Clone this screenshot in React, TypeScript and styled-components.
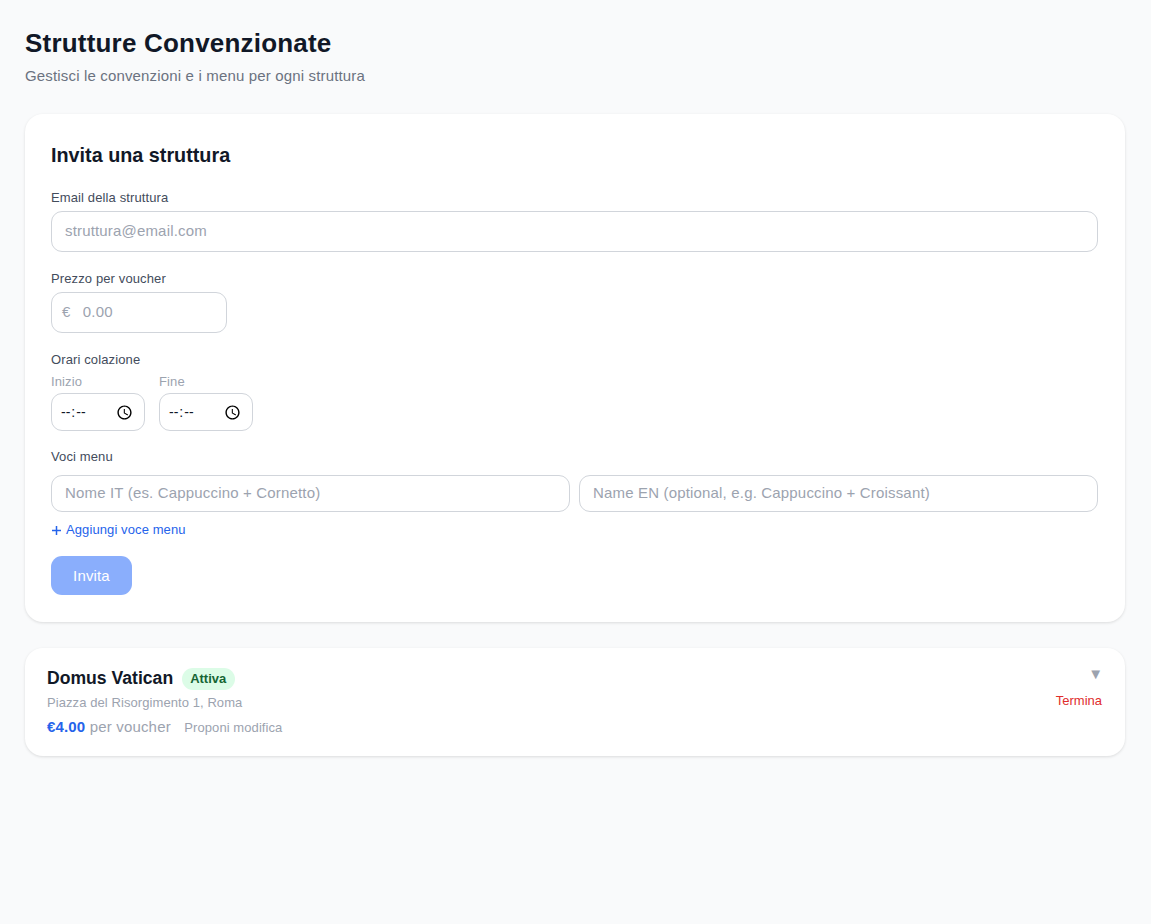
import styled, { createGlobalStyle } from "styled-components";

const GlobalStyle = createGlobalStyle`
  * { box-sizing: border-box; }
  html, body { margin: 0; background: #f9fafb; }
  body { font-family: "Liberation Sans", Arial, sans-serif; color: #111827; }
  input { font-family: inherit; }
`;

const Page = styled.main`
  min-height: 924px;
  padding: 26px 26px 26px 25px;
`;

const Title = styled.h1`
  margin: 0;
  font-size: 26px;
  letter-spacing: 0.2px;
  line-height: 34px;
  font-weight: 700;
  color: #111827;
`;

const Subtitle = styled.p`
  margin: 6px 0 0;
  font-size: 15px;
  letter-spacing: 0.16px;
  line-height: 20px;
  color: #6b7280;
`;

const Card = styled.section`
  margin-top: 28px;
  padding: 26px 27px 27px 26px;
  background: #fff;
  border-radius: 18px;
  box-shadow: 0 1px 3px rgba(0, 0, 0, 0.12);
`;

const CardTitle = styled.h2`
  margin: 0 0 19px;
  font-size: 19.8px;
  line-height: 30px;
  font-weight: 700;
  color: #111827;
`;

const Field = styled.div<{ $gap?: number }>`
  margin-bottom: ${(p) => p.$gap ?? 17.5}px;
`;

const Label = styled.label<{ $gap?: number }>`
  display: block;
  margin-bottom: ${(p) => p.$gap ?? 3.5}px;
  font-size: 13px;
  letter-spacing: 0.12px;
  line-height: 18.5px;
  color: #434c5c;
`;

const Input = styled.input`
  display: block;
  width: 100%;
  height: 41px;
  padding: 0 13px 2px;
  border: 1px solid #d1d5db;
  border-radius: 11px;
  background: #fff;
  font-size: 15px;
  letter-spacing: 0.17px;
  color: #111827;
  outline: none;
  &::placeholder { color: #9ca3af; opacity: 1; }
`;

const PriceBox = styled.div`
  display: flex;
  align-items: center;
  gap: 12.5px;
  width: 176px;
  height: 41px;
  padding: 0 10px 2px;
  border: 1px solid #d1d5db;
  border-radius: 11px;
  font-size: 15px;
  color: #9ca3af;
`;

const PriceInput = styled.input`
  width: 100px;
  border: 0;
  padding: 0;
  font-size: 15px;
  letter-spacing: 0.17px;
  outline: none;
  &::placeholder { color: #9ca3af; opacity: 1; }
`;

const TimeRow = styled.div`
  display: flex;
  gap: 14px;
`;

const SmallLabel = styled.label`
  display: block;
  margin-bottom: 1px;
  font-size: 13px;
  letter-spacing: 0.12px;
  line-height: 20px;
  color: #9ca3af;
`;

const TimeInput = styled.input`
  display: block;
  width: 94px;
  height: 38px;
  padding: 0 11px 0 8px;
  border: 1px solid #d1d5db;
  border-radius: 11px;
  background: #fff;
  font-size: 14px;
  color: #111827;
  outline: none;
  &::-webkit-datetime-edit-ampm-field { display: none; }
  &::-webkit-calendar-picker-indicator {
    width: 17px;
    height: 17px;
    margin: 0;
    padding: 0;
  }
`;

const MenuRow = styled.div`
  display: grid;
  grid-template-columns: 1fr 1fr;
  gap: 9px;
`;

const MenuInput = styled(Input)`
  height: 37px;
`;

const AddLink = styled.button`
  display: flex;
  align-items: center;
  gap: 5px;
  margin: 9px 0 17px;
  padding: 0 0 0 1px;
  border: 0;
  background: none;
  font-family: inherit;
  font-size: 13px;
  letter-spacing: 0.1px;
  line-height: 18px;
  color: #2563eb;
`;

const PlusGlyph = styled.svg`
  display: block;
  width: 9px;
  height: 9px;
  stroke: currentColor;
  stroke-width: 1.5;
`;

const PrimaryButton = styled.button`
  display: block;
  width: 81px;
  height: 39px;
  border: 0;
  border-radius: 11px;
  background: #8aaefc;
  font-family: inherit;
  font-size: 15px;
  letter-spacing: 0.15px;
  color: #fff;
`;

const ItemCard = styled.article`
  display: flex;
  justify-content: space-between;
  margin-top: 26px;
  padding: 19px 23px 19px 22px;
  background: #fff;
  border-radius: 18px;
  box-shadow: 0 1px 3px rgba(0, 0, 0, 0.12);
`;

const NameRow = styled.div`
  display: flex;
  align-items: center;
  gap: 9px;
  height: 22px;
`;

const Name = styled.h3`
  margin: 0;
  font-size: 17.6px;
  line-height: 22px;
  font-weight: 700;
  color: #111827;
`;

const Badge = styled.span`
  margin-top: 2px;
  padding: 2px 9px 2px 8px;
  border-radius: 999px;
  background: #dcfce7;
  font-size: 13px;
  line-height: 18px;
  font-weight: 700;
  color: #166534;
`;

const Address = styled.p`
  margin: 5px 0 0;
  font-size: 13px;
  letter-spacing: 0.08px;
  line-height: 18px;
  color: #9ca3af;
`;

const PriceRow = styled.div`
  display: flex;
  align-items: baseline;
  gap: 13.5px;
  margin-top: 5px;
`;

const Price = styled.span`
  font-size: 15px;
  letter-spacing: 0.17px;
  line-height: 20px;
  color: #9ca3af;
  b { color: #2563eb; }
`;

const ProposeLink = styled.span`
  font-size: 13px;
  letter-spacing: 0.08px;
  font-weight: 400;
  color: #9ca3af;
`;

const Actions = styled.div`
  display: flex;
  flex-direction: column;
  align-items: flex-end;
`;

const Chevron = styled.span`
  margin: -2px -1px 0 0;
  font-size: 15px;
  line-height: 18px;
  color: #9ca3af;
`;

const EndLink = styled.button`
  margin-top: 9px;
  padding: 0;
  border: 0;
  background: none;
  font-family: inherit;
  font-size: 13px;
  line-height: 18px;
  color: #e02d2d;
`;

export default function App() {
  return (
    <Page>
      <GlobalStyle />
      <Title>Strutture Convenzionate</Title>
      <Subtitle>Gestisci le convenzioni e i menu per ogni struttura</Subtitle>

      <Card>
        <CardTitle>Invita una struttura</CardTitle>
        <Field>
          <Label>Email della struttura</Label>
          <Input type="email" placeholder="struttura@email.com" />
        </Field>
        <Field $gap={18}>
          <Label>Prezzo per voucher</Label>
          <PriceBox>
            €
            <PriceInput placeholder="0.00" />
          </PriceBox>
        </Field>
        <Field $gap={16.5}>
          <Label $gap={3}>Orari colazione</Label>
          <TimeRow>
            <div>
              <SmallLabel>Inizio</SmallLabel>
              <TimeInput type="time" />
            </div>
            <div>
              <SmallLabel>Fine</SmallLabel>
              <TimeInput type="time" />
            </div>
          </TimeRow>
        </Field>
        <Label $gap={9}>Voci menu</Label>
        <MenuRow>
          <MenuInput placeholder="Nome IT (es. Cappuccino + Cornetto)" />
          <MenuInput placeholder="Name EN (optional, e.g. Cappuccino + Croissant)" />
        </MenuRow>
        <AddLink>
          <PlusGlyph viewBox="0 0 9 9">
            <path d="M4.5 0V9M0 4.5H9" />
          </PlusGlyph>
          Aggiungi voce menu
        </AddLink>
        <PrimaryButton disabled>Invita</PrimaryButton>
      </Card>

      <ItemCard>
        <div>
          <NameRow>
            <Name>Domus Vatican</Name>
            <Badge>Attiva</Badge>
          </NameRow>
          <Address>Piazza del Risorgimento 1, Roma</Address>
          <PriceRow>
            <Price>
              <b>€4.00</b> per voucher
            </Price>
            <ProposeLink>Proponi modifica</ProposeLink>
          </PriceRow>
        </div>
        <Actions>
          <Chevron>▼</Chevron>
          <EndLink>Termina</EndLink>
        </Actions>
      </ItemCard>
    </Page>
  );
}
